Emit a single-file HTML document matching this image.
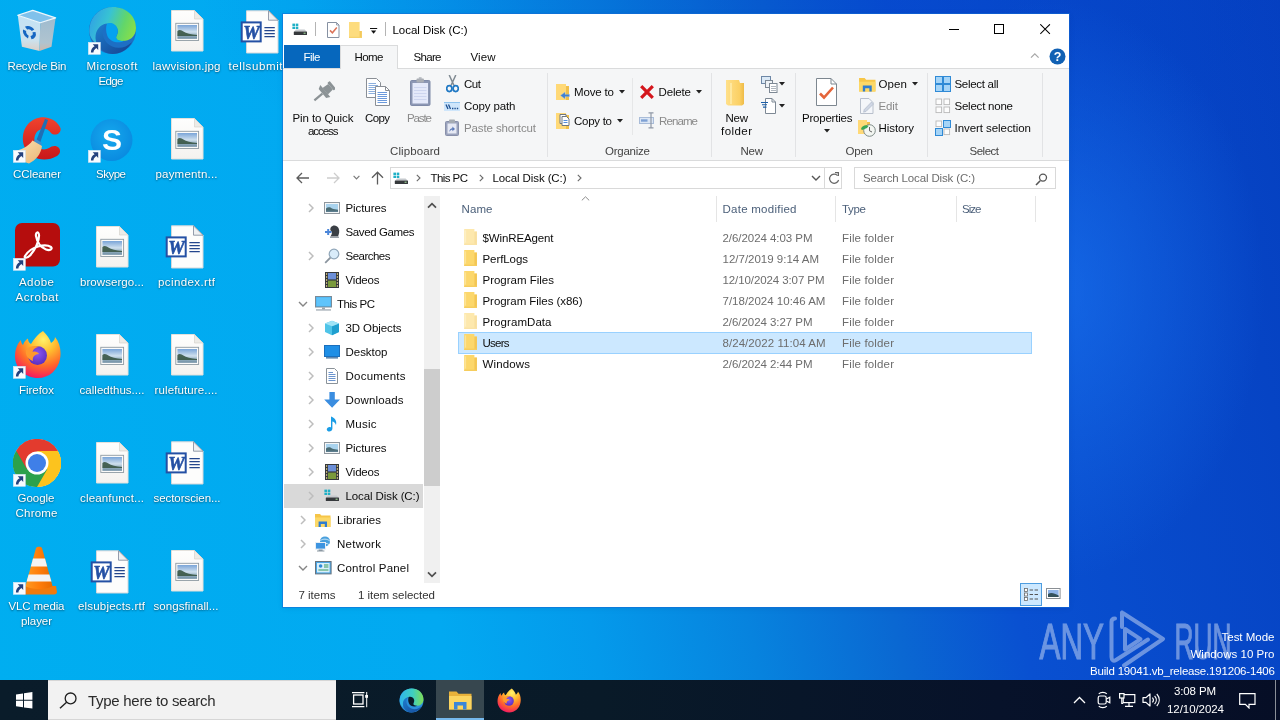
<!DOCTYPE html>
<html lang="en"><head><meta charset="utf-8"><title>Local Disk (C:)</title>
<style>
html,body{margin:0;padding:0}
body{width:1280px;height:720px;overflow:hidden;position:relative;font-family:"Liberation Sans", sans-serif;background:#0aa0ee}
#root{position:absolute;left:0;top:0;width:1280px;height:720px;overflow:hidden;will-change:transform}
#root div,#root svg,#root span.t{position:absolute;display:block}
span.t{white-space:pre}

</style></head><body><div id="root">
<div id="wall" style="left:0;top:0;width:1280px;height:720px;background:radial-gradient(ellipse 210px 290px at 1055px 290px, rgba(28,120,245,.6), rgba(28,120,245,0) 100%),radial-gradient(ellipse 620px 230px at 820px 0px, rgba(0,60,200,.34), rgba(0,60,200,0) 100%),linear-gradient(77.6deg,#00aef0 0%,#02a9f1 32%,#049aeb 42.5%,#0783de 53.5%,#0a68d2 63.5%,#0950d1 72.5%,#0540c0 100%)"></div>
<svg style="left:16px;top:8px;" width="42" height="45" viewBox="0 0 42 45"><defs><linearGradient id="rbl" x1="0" y1="0" x2="0" y2="1"><stop offset="0" stop-color="#d2e6f5"/><stop offset=".7" stop-color="#dbe6ee"/><stop offset="1" stop-color="#ecd2c4"/></linearGradient><linearGradient id="rbr" x1="0" y1="0" x2="0" y2="1"><stop offset="0" stop-color="#a7bccd"/><stop offset=".75" stop-color="#b9c5ce"/><stop offset="1" stop-color="#d9b9a8"/></linearGradient></defs><path d="M1.75 7.25 L16.75 2.4 L39.6 9.9 L24.25 14.75Z" fill="#8ec3ea" opacity=".9"/><path d="M1.75 7.25 L24.25 14.75 L23.5 42.9 L5.9 38.75Z" fill="url(#rbl)" opacity=".93"/><path d="M24.25 14.75 L39.6 9.9 L35.5 38.75 L23.5 42.9Z" fill="url(#rbr)" opacity=".95"/><path d="M1.75 7.25 L16.75 2.4 L39.6 9.9 L24.25 14.75Z" fill="none" stroke="#eef6fb" stroke-width="1.3" stroke-linejoin="round"/><g transform="translate(13.4 24.6) skewY(14)"><circle cx="0" cy="0" r="4.9" fill="none" stroke="#1566c2" stroke-width="3.2" stroke-dasharray="7.6 2.66" transform="rotate(-20)"/></g></svg>
<span class="t" style="left:7.50px;top:59.00px;font-size:11.5px;line-height:14px;color:#fff;letter-spacing:-0.172px;text-shadow:0 1px 2px rgba(0,0,0,.42),0 0 2px rgba(0,0,0,.22);">Recycle Bin</span>
<svg style="left:88px;top:6px;" width="49" height="49" viewBox="0 0 49 49"><defs><linearGradient id="eg1" x1="0" y1="0" x2="1" y2="1"><stop offset="0" stop-color="#35c1f1"/><stop offset=".5" stop-color="#2fa2e4"/><stop offset="1" stop-color="#1b66b9"/></linearGradient><linearGradient id="eg2" x1="0" y1=".2" x2="1" y2=".5"><stop offset="0" stop-color="#2f9fe6"/><stop offset=".4" stop-color="#38c3d3"/><stop offset=".75" stop-color="#62d66a"/><stop offset="1" stop-color="#86de4c"/></linearGradient><linearGradient id="eg3" x1="0" y1="0" x2="1" y2="1"><stop offset="0" stop-color="#1d7fd0"/><stop offset="1" stop-color="#15418f"/></linearGradient></defs><circle cx="24.5" cy="24.5" r="23.5" fill="#1d6fc4"/><path d="M1.5 22 C3 9 13 1 25 1 C38 1 48 10 48 22 C48 31 41 35 35 35 C30 35 27 33 28.5 30 C30 27 30.5 25 29 22 C27 18 22 16.5 18 18 C9 21 6 30 9 38 C3 34 .5 28 1.5 22Z" fill="url(#eg2)"/><path d="M9 38 C5 28 10 19 19 17.6 C13 22 13.5 31 19 37 C25 43 36 44 44 36 C40 44 32 48 24.5 48 C18 48 12 44 9 38Z" fill="url(#eg3)"/><path d="M19 17.6 C23 16 28 18 29.4 22.4 C30.4 25.4 29.4 27.6 28.4 30 C27 33.4 31 35.4 36 34.8 C31 38 22 36 19.4 30 C17.6 25.6 17.8 20.6 19 17.6Z" fill="#04a2ef"/></svg>
<svg style="left:88px;top:42px;" width="13" height="13" viewBox="0 0 13 13"><rect x=".3" y=".3" width="12" height="12" fill="#f7fbff" stroke="#cfe3f3" stroke-width=".6"/><path d="M10.2 2.3 L10.2 7.9 L8.4 6.1 C6.6 7.2 5.6 8.6 5.4 10.6 L2.9 10.4 C2.9 7.6 4.2 5.6 6.6 4.3 L4.7 2.3Z" fill="#23427f"/></svg>
<span class="t" style="left:86.50px;top:59.00px;font-size:11.5px;line-height:14px;color:#fff;letter-spacing:0.543px;text-shadow:0 1px 2px rgba(0,0,0,.42),0 0 2px rgba(0,0,0,.22);">Microsoft</span>
<span class="t" style="left:98.50px;top:74.00px;font-size:11.5px;line-height:14px;color:#fff;letter-spacing:-0.620px;text-shadow:0 1px 2px rgba(0,0,0,.42),0 0 2px rgba(0,0,0,.22);">Edge</span>
<svg style="left:171px;top:10px;" width="33" height="42" viewBox="0 0 33 42"><defs><linearGradient id="pg" x1="0" y1="0" x2="0" y2="1"><stop offset="0" stop-color="#fefefd"/><stop offset="1" stop-color="#f4f2ef"/></linearGradient><linearGradient id="sky" x1="0" y1="0" x2="0" y2="1"><stop offset="0" stop-color="#7aa5d8"/><stop offset=".5" stop-color="#cfe0ee"/><stop offset=".7" stop-color="#9db7c6"/><stop offset="1" stop-color="#6d8ca2"/></linearGradient></defs><path d="M0.5 0.5 H23.5 L32 9 V41 H0.5Z" fill="url(#pg)" stroke="#e3e1dc" stroke-width="1"/><path d="M23.5 0.5 V9 H32Z" fill="#ecebe7" stroke="#d6d3cd" stroke-width=".7"/><rect x="4.8" y="13.3" width="22.8" height="17.2" fill="#fbfbfa" stroke="#8f9ba3" stroke-width=".9"/><rect x="6.4" y="15" width="19.6" height="13.8" fill="url(#sky)"/><path d="M6.4 21 C8 19.6 10.4 19.8 12.4 21.6 C15 23.6 20 24.6 26 25 V26 H6.4Z" fill="#3b5848" opacity=".92"/></svg>
<span class="t" style="left:152.50px;top:59.00px;font-size:11.5px;line-height:14px;color:#fff;letter-spacing:0.233px;text-shadow:0 1px 2px rgba(0,0,0,.42),0 0 2px rgba(0,0,0,.22);">lawvision.jpg</span>
<svg style="left:240px;top:10px;" width="39" height="44" viewBox="0 0 39 44"><path d="M6.5 0.8 H28.5 L38 10.2 V43 H6.5Z" fill="#fdfdfc" stroke="#d4d7db" stroke-width="1"/><path d="M28.5 0.8 V10.2 H38Z" fill="#eef0f2" stroke="#8a93a3" stroke-width=".9" stroke-linejoin="round"/><g stroke="#24468c" stroke-width="1.3"><path d="M24.4 17.6H34.8M24.4 20.6H34.8M24.4 23.6H34.8M24.4 26.6H34.8"/></g><rect x="1.7" y="12.4" width="19" height="19" fill="#fff" stroke="#2450a4" stroke-width="2"/><text x="11.4" y="28.6" font-family="Liberation Serif, serif" font-size="19" font-weight="700" font-style="italic" text-anchor="middle" fill="#2450a4" stroke="#2450a4" stroke-width=".6" textLength="16.5" lengthAdjust="spacingAndGlyphs">W</text></svg>
<span class="t" style="left:228.50px;top:59.00px;font-size:11.5px;line-height:14px;color:#fff;letter-spacing:0.602px;text-shadow:0 1px 2px rgba(0,0,0,.42),0 0 2px rgba(0,0,0,.22);">tellsubmit</span>
<svg style="left:13px;top:115px;" width="50" height="49" viewBox="0 0 50 49"><defs><linearGradient id="cc" x1="0" y1="0" x2="0" y2="1"><stop offset="0" stop-color="#f0432e"/><stop offset="1" stop-color="#c8171a"/></linearGradient><linearGradient id="br" x1="0" y1="0" x2="1" y2="1"><stop offset="0" stop-color="#fbe3b3"/><stop offset="1" stop-color="#e9b677"/></linearGradient></defs><path d="M47 12 C42 3 31 0 22 4 C11 9 7 22 12 33 C17 44 32 48 44 41 C47 39 48 36 46 33 C43 30 39 31 36 33 C31 36 24 34 22 28 C20 22 23 15 29 14 C33 13 36 15 38 18 C40 20 44 20 46 18 C48 16 48 14 47 12Z" fill="url(#cc)"/><path d="M32 4 L35 5 L27 28 L23 26Z" fill="#1f6fb5"/><path d="M23 24 L29 28 L27 33 L19 29Z" fill="#3c8fd0"/><path d="M19.5 25.5 L29 31 C28 39 23 45 16 48.5 C10 46.5 4 42.5 0 36.5 C8 35 15.5 31.5 19.5 25.5Z" fill="url(#br)"/></svg>
<svg style="left:13px;top:150px;" width="13" height="13" viewBox="0 0 13 13"><rect x=".3" y=".3" width="12" height="12" fill="#f7fbff" stroke="#cfe3f3" stroke-width=".6"/><path d="M10.2 2.3 L10.2 7.9 L8.4 6.1 C6.6 7.2 5.6 8.6 5.4 10.6 L2.9 10.4 C2.9 7.6 4.2 5.6 6.6 4.3 L4.7 2.3Z" fill="#23427f"/></svg>
<span class="t" style="left:13.00px;top:167.00px;font-size:11.5px;line-height:14px;color:#fff;letter-spacing:-0.083px;text-shadow:0 1px 2px rgba(0,0,0,.42),0 0 2px rgba(0,0,0,.22);">CCleaner</span>
<svg style="left:90px;top:117px;" width="43" height="46" viewBox="0 0 43 46"><defs><radialGradient id="sk" cx=".45" cy=".4" r=".6"><stop offset="0" stop-color="#15a9ee"/><stop offset="1" stop-color="#0a8be0"/></radialGradient></defs><circle cx="21.5" cy="23" r="21" fill="url(#sk)"/><text x="22" y="32.5" font-family="Liberation Sans, sans-serif" font-size="30" font-weight="700" text-anchor="middle" fill="#fff">S</text></svg>
<svg style="left:88px;top:150px;" width="13" height="13" viewBox="0 0 13 13"><rect x=".3" y=".3" width="12" height="12" fill="#f7fbff" stroke="#cfe3f3" stroke-width=".6"/><path d="M10.2 2.3 L10.2 7.9 L8.4 6.1 C6.6 7.2 5.6 8.6 5.4 10.6 L2.9 10.4 C2.9 7.6 4.2 5.6 6.6 4.3 L4.7 2.3Z" fill="#23427f"/></svg>
<span class="t" style="left:96.00px;top:167.00px;font-size:11.5px;line-height:14px;color:#fff;letter-spacing:-0.492px;text-shadow:0 1px 2px rgba(0,0,0,.42),0 0 2px rgba(0,0,0,.22);">Skype</span>
<svg style="left:171px;top:118px;" width="33" height="42" viewBox="0 0 33 42"><path d="M0.5 0.5 H23.5 L32 9 V41 H0.5Z" fill="url(#pg)" stroke="#e3e1dc" stroke-width="1"/><path d="M23.5 0.5 V9 H32Z" fill="#ecebe7" stroke="#d6d3cd" stroke-width=".7"/><rect x="4.8" y="13.3" width="22.8" height="17.2" fill="#fbfbfa" stroke="#8f9ba3" stroke-width=".9"/><rect x="6.4" y="15" width="19.6" height="13.8" fill="url(#sky)"/><path d="M6.4 21 C8 19.6 10.4 19.8 12.4 21.6 C15 23.6 20 24.6 26 25 V26 H6.4Z" fill="#3b5848" opacity=".92"/></svg>
<span class="t" style="left:155.50px;top:167.00px;font-size:11.5px;line-height:14px;color:#fff;letter-spacing:0.191px;text-shadow:0 1px 2px rgba(0,0,0,.42),0 0 2px rgba(0,0,0,.22);">paymentn...</span>
<svg style="left:15px;top:223px;" width="45" height="44" viewBox="0 0 45 44"><rect x="0" y="0" width="45" height="43.5" rx="7" fill="#b50d0d"/><path d="M10 33 C13 28 18 25 23 23.5 C28 22 33 22 36 24 C38 26 35 28 31 26.5 C26 24.5 22 19 21 13 C20.4 9 23.6 8 24 12 C24.4 18 20 27 15 32.5 C12.4 35.4 8.6 35.4 10 33Z" fill="none" stroke="#fff" stroke-width="2.2" stroke-linejoin="round"/></svg>
<svg style="left:13px;top:258px;" width="13" height="13" viewBox="0 0 13 13"><rect x=".3" y=".3" width="12" height="12" fill="#f7fbff" stroke="#cfe3f3" stroke-width=".6"/><path d="M10.2 2.3 L10.2 7.9 L8.4 6.1 C6.6 7.2 5.6 8.6 5.4 10.6 L2.9 10.4 C2.9 7.6 4.2 5.6 6.6 4.3 L4.7 2.3Z" fill="#23427f"/></svg>
<span class="t" style="left:19.00px;top:275.00px;font-size:11.5px;line-height:14px;color:#fff;letter-spacing:0.434px;text-shadow:0 1px 2px rgba(0,0,0,.42),0 0 2px rgba(0,0,0,.22);">Adobe</span>
<span class="t" style="left:15.50px;top:290.00px;font-size:11.5px;line-height:14px;color:#fff;letter-spacing:0.560px;text-shadow:0 1px 2px rgba(0,0,0,.42),0 0 2px rgba(0,0,0,.22);">Acrobat</span>
<svg style="left:96px;top:226px;" width="33" height="42" viewBox="0 0 33 42"><path d="M0.5 0.5 H23.5 L32 9 V41 H0.5Z" fill="url(#pg)" stroke="#e3e1dc" stroke-width="1"/><path d="M23.5 0.5 V9 H32Z" fill="#ecebe7" stroke="#d6d3cd" stroke-width=".7"/><rect x="4.8" y="13.3" width="22.8" height="17.2" fill="#fbfbfa" stroke="#8f9ba3" stroke-width=".9"/><rect x="6.4" y="15" width="19.6" height="13.8" fill="url(#sky)"/><path d="M6.4 21 C8 19.6 10.4 19.8 12.4 21.6 C15 23.6 20 24.6 26 25 V26 H6.4Z" fill="#3b5848" opacity=".92"/></svg>
<span class="t" style="left:80.00px;top:275.00px;font-size:11.5px;line-height:14px;color:#fff;letter-spacing:0.065px;text-shadow:0 1px 2px rgba(0,0,0,.42),0 0 2px rgba(0,0,0,.22);">browsergo...</span>
<svg style="left:165px;top:225px;" width="39" height="44" viewBox="0 0 39 44"><path d="M6.5 0.8 H28.5 L38 10.2 V43 H6.5Z" fill="#fdfdfc" stroke="#d4d7db" stroke-width="1"/><path d="M28.5 0.8 V10.2 H38Z" fill="#eef0f2" stroke="#8a93a3" stroke-width=".9" stroke-linejoin="round"/><g stroke="#24468c" stroke-width="1.3"><path d="M24.4 17.6H34.8M24.4 20.6H34.8M24.4 23.6H34.8M24.4 26.6H34.8"/></g><rect x="1.7" y="12.4" width="19" height="19" fill="#fff" stroke="#2450a4" stroke-width="2"/><text x="11.4" y="28.6" font-family="Liberation Serif, serif" font-size="19" font-weight="700" font-style="italic" text-anchor="middle" fill="#2450a4" stroke="#2450a4" stroke-width=".6" textLength="16.5" lengthAdjust="spacingAndGlyphs">W</text></svg>
<span class="t" style="left:158.00px;top:275.00px;font-size:11.5px;line-height:14px;color:#fff;letter-spacing:0.394px;text-shadow:0 1px 2px rgba(0,0,0,.42),0 0 2px rgba(0,0,0,.22);">pcindex.rtf</span>
<svg style="left:14px;top:330px;" width="47" height="49" viewBox="0 0 47 49"><defs><radialGradient id="ff" cx=".62" cy=".18" r=".95"><stop offset="0" stop-color="#fff36b"/><stop offset=".3" stop-color="#ffbd2e"/><stop offset=".6" stop-color="#ff6a2a"/><stop offset=".85" stop-color="#f5245a"/><stop offset="1" stop-color="#c60084"/></radialGradient><radialGradient id="fp" cx=".5" cy=".4" r=".6"><stop offset="0" stop-color="#8b58f2"/><stop offset="1" stop-color="#5a2ec0"/></radialGradient></defs><path d="M29 1 C33 5 36 9 37 13 C40 11 41 9 41 7 C46 13 47.5 21 46 29 C44 40 35 48 24 48 C11 48 1 38 1 26 C1 20 3 14 7 10 C7 12 7.6 13.6 9 15 C10 12 12 9.6 14 8.6 C14 11 15 13 17 14 C20 9 24 4 29 1Z" fill="url(#ff)"/><circle cx="23.5" cy="25.5" r="9.5" fill="url(#fp)"/><path d="M12 20 C15 16 21 15 26 17 C22 17 19 19 18.6 22 C21 21 24 22 25 24 C21 24 18 27 19 31 C14 29 11 25 12 20Z" fill="#ff9a2e"/></svg>
<svg style="left:13px;top:366px;" width="13" height="13" viewBox="0 0 13 13"><rect x=".3" y=".3" width="12" height="12" fill="#f7fbff" stroke="#cfe3f3" stroke-width=".6"/><path d="M10.2 2.3 L10.2 7.9 L8.4 6.1 C6.6 7.2 5.6 8.6 5.4 10.6 L2.9 10.4 C2.9 7.6 4.2 5.6 6.6 4.3 L4.7 2.3Z" fill="#23427f"/></svg>
<span class="t" style="left:19.00px;top:383.00px;font-size:11.5px;line-height:14px;color:#fff;letter-spacing:-0.026px;text-shadow:0 1px 2px rgba(0,0,0,.42),0 0 2px rgba(0,0,0,.22);">Firefox</span>
<svg style="left:96px;top:334px;" width="33" height="42" viewBox="0 0 33 42"><path d="M0.5 0.5 H23.5 L32 9 V41 H0.5Z" fill="url(#pg)" stroke="#e3e1dc" stroke-width="1"/><path d="M23.5 0.5 V9 H32Z" fill="#ecebe7" stroke="#d6d3cd" stroke-width=".7"/><rect x="4.8" y="13.3" width="22.8" height="17.2" fill="#fbfbfa" stroke="#8f9ba3" stroke-width=".9"/><rect x="6.4" y="15" width="19.6" height="13.8" fill="url(#sky)"/><path d="M6.4 21 C8 19.6 10.4 19.8 12.4 21.6 C15 23.6 20 24.6 26 25 V26 H6.4Z" fill="#3b5848" opacity=".92"/></svg>
<span class="t" style="left:79.50px;top:383.00px;font-size:11.5px;line-height:14px;color:#fff;letter-spacing:0.032px;text-shadow:0 1px 2px rgba(0,0,0,.42),0 0 2px rgba(0,0,0,.22);">calledthus....</span>
<svg style="left:171px;top:334px;" width="33" height="42" viewBox="0 0 33 42"><path d="M0.5 0.5 H23.5 L32 9 V41 H0.5Z" fill="url(#pg)" stroke="#e3e1dc" stroke-width="1"/><path d="M23.5 0.5 V9 H32Z" fill="#ecebe7" stroke="#d6d3cd" stroke-width=".7"/><rect x="4.8" y="13.3" width="22.8" height="17.2" fill="#fbfbfa" stroke="#8f9ba3" stroke-width=".9"/><rect x="6.4" y="15" width="19.6" height="13.8" fill="url(#sky)"/><path d="M6.4 21 C8 19.6 10.4 19.8 12.4 21.6 C15 23.6 20 24.6 26 25 V26 H6.4Z" fill="#3b5848" opacity=".92"/></svg>
<span class="t" style="left:154.50px;top:383.00px;font-size:11.5px;line-height:14px;color:#fff;letter-spacing:0.125px;text-shadow:0 1px 2px rgba(0,0,0,.42),0 0 2px rgba(0,0,0,.22);">rulefuture....</span>
<svg style="left:13px;top:439px;" width="48" height="48" viewBox="0 0 48 48"><circle cx="24" cy="24" r="24" fill="#fff"/><path d="M24 24 L3.2 12 A24 24 0 0 1 44.8 12 Z" fill="#e33b2e"/><path d="M24 24 L44.8 12 A24 24 0 0 1 24 48 Z" fill="#fcc31e"/><path d="M24 24 L24 48 A24 24 0 0 1 3.2 12 Z" fill="#2ca14c"/><path d="M24 12 H44.8 A24 24 0 0 0 3.2 12 L13.6 30 Z" fill="#e33b2e"/><path d="M34.4 30 L24 48 A24 24 0 0 0 44.8 12 H24 Z" fill="#fcc31e"/><path d="M13.6 30 L3.2 12 A24 24 0 0 0 24 48 L34.4 30 Z" fill="#2ca14c"/><circle cx="24" cy="24" r="11.5" fill="#fff"/><circle cx="24" cy="24" r="9" fill="#3f7fe8"/></svg>
<svg style="left:13px;top:474px;" width="13" height="13" viewBox="0 0 13 13"><rect x=".3" y=".3" width="12" height="12" fill="#f7fbff" stroke="#cfe3f3" stroke-width=".6"/><path d="M10.2 2.3 L10.2 7.9 L8.4 6.1 C6.6 7.2 5.6 8.6 5.4 10.6 L2.9 10.4 C2.9 7.6 4.2 5.6 6.6 4.3 L4.7 2.3Z" fill="#23427f"/></svg>
<span class="t" style="left:17.50px;top:491.00px;font-size:11.5px;line-height:14px;color:#fff;letter-spacing:-0.019px;text-shadow:0 1px 2px rgba(0,0,0,.42),0 0 2px rgba(0,0,0,.22);">Google</span>
<span class="t" style="left:15.50px;top:506.00px;font-size:11.5px;line-height:14px;color:#fff;letter-spacing:0.219px;text-shadow:0 1px 2px rgba(0,0,0,.42),0 0 2px rgba(0,0,0,.22);">Chrome</span>
<svg style="left:96px;top:442px;" width="33" height="42" viewBox="0 0 33 42"><path d="M0.5 0.5 H23.5 L32 9 V41 H0.5Z" fill="url(#pg)" stroke="#e3e1dc" stroke-width="1"/><path d="M23.5 0.5 V9 H32Z" fill="#ecebe7" stroke="#d6d3cd" stroke-width=".7"/><rect x="4.8" y="13.3" width="22.8" height="17.2" fill="#fbfbfa" stroke="#8f9ba3" stroke-width=".9"/><rect x="6.4" y="15" width="19.6" height="13.8" fill="url(#sky)"/><path d="M6.4 21 C8 19.6 10.4 19.8 12.4 21.6 C15 23.6 20 24.6 26 25 V26 H6.4Z" fill="#3b5848" opacity=".92"/></svg>
<span class="t" style="left:80.00px;top:491.00px;font-size:11.5px;line-height:14px;color:#fff;letter-spacing:0.165px;text-shadow:0 1px 2px rgba(0,0,0,.42),0 0 2px rgba(0,0,0,.22);">cleanfunct...</span>
<svg style="left:165px;top:441px;" width="39" height="44" viewBox="0 0 39 44"><path d="M6.5 0.8 H28.5 L38 10.2 V43 H6.5Z" fill="#fdfdfc" stroke="#d4d7db" stroke-width="1"/><path d="M28.5 0.8 V10.2 H38Z" fill="#eef0f2" stroke="#8a93a3" stroke-width=".9" stroke-linejoin="round"/><g stroke="#24468c" stroke-width="1.3"><path d="M24.4 17.6H34.8M24.4 20.6H34.8M24.4 23.6H34.8M24.4 26.6H34.8"/></g><rect x="1.7" y="12.4" width="19" height="19" fill="#fff" stroke="#2450a4" stroke-width="2"/><text x="11.4" y="28.6" font-family="Liberation Serif, serif" font-size="19" font-weight="700" font-style="italic" text-anchor="middle" fill="#2450a4" stroke="#2450a4" stroke-width=".6" textLength="16.5" lengthAdjust="spacingAndGlyphs">W</text></svg>
<span class="t" style="left:153.50px;top:491.00px;font-size:11.5px;line-height:14px;color:#fff;letter-spacing:-0.058px;text-shadow:0 1px 2px rgba(0,0,0,.42),0 0 2px rgba(0,0,0,.22);">sectorscien...</span>
<svg style="left:20px;top:546px;" width="38" height="49" viewBox="0 0 38 49"><defs><linearGradient id="vl" x1="0" y1="0" x2="1" y2="0"><stop offset="0" stop-color="#ff9a1f"/><stop offset=".5" stop-color="#ff7d0a"/><stop offset="1" stop-color="#e86a00"/></linearGradient></defs><path d="M2 40 L36 40 L37 46 C37 48 35 48.5 33 48.5 H5 C3 48.5 1 48 1 46Z" fill="#f07a0c"/><path d="M16 2 C17 .4 21 .4 22 2 L32.5 40 C28 44 10 44 5.5 40Z" fill="url(#vl)"/><path d="M13 12.5 H25 L27.2 20.5 H10.8Z" fill="#f3f3f3"/><path d="M8.6 28.5 H29.4 L31.4 35.5 H6.6Z" fill="#f3f3f3"/></svg>
<svg style="left:13px;top:582px;" width="13" height="13" viewBox="0 0 13 13"><rect x=".3" y=".3" width="12" height="12" fill="#f7fbff" stroke="#cfe3f3" stroke-width=".6"/><path d="M10.2 2.3 L10.2 7.9 L8.4 6.1 C6.6 7.2 5.6 8.6 5.4 10.6 L2.9 10.4 C2.9 7.6 4.2 5.6 6.6 4.3 L4.7 2.3Z" fill="#23427f"/></svg>
<span class="t" style="left:8.50px;top:599.00px;font-size:11.5px;line-height:14px;color:#fff;letter-spacing:-0.111px;text-shadow:0 1px 2px rgba(0,0,0,.42),0 0 2px rgba(0,0,0,.22);">VLC media</span>
<span class="t" style="left:21.00px;top:614.00px;font-size:11.5px;line-height:14px;color:#fff;letter-spacing:-0.066px;text-shadow:0 1px 2px rgba(0,0,0,.42),0 0 2px rgba(0,0,0,.22);">player</span>
<svg style="left:90px;top:550px;" width="39" height="44" viewBox="0 0 39 44"><path d="M6.5 0.8 H28.5 L38 10.2 V43 H6.5Z" fill="#fdfdfc" stroke="#d4d7db" stroke-width="1"/><path d="M28.5 0.8 V10.2 H38Z" fill="#eef0f2" stroke="#8a93a3" stroke-width=".9" stroke-linejoin="round"/><g stroke="#24468c" stroke-width="1.3"><path d="M24.4 17.6H34.8M24.4 20.6H34.8M24.4 23.6H34.8M24.4 26.6H34.8"/></g><rect x="1.7" y="12.4" width="19" height="19" fill="#fff" stroke="#2450a4" stroke-width="2"/><text x="11.4" y="28.6" font-family="Liberation Serif, serif" font-size="19" font-weight="700" font-style="italic" text-anchor="middle" fill="#2450a4" stroke="#2450a4" stroke-width=".6" textLength="16.5" lengthAdjust="spacingAndGlyphs">W</text></svg>
<span class="t" style="left:78.00px;top:599.00px;font-size:11.5px;line-height:14px;color:#fff;letter-spacing:0.188px;text-shadow:0 1px 2px rgba(0,0,0,.42),0 0 2px rgba(0,0,0,.22);">elsubjects.rtf</span>
<svg style="left:171px;top:550px;" width="33" height="42" viewBox="0 0 33 42"><path d="M0.5 0.5 H23.5 L32 9 V41 H0.5Z" fill="url(#pg)" stroke="#e3e1dc" stroke-width="1"/><path d="M23.5 0.5 V9 H32Z" fill="#ecebe7" stroke="#d6d3cd" stroke-width=".7"/><rect x="4.8" y="13.3" width="22.8" height="17.2" fill="#fbfbfa" stroke="#8f9ba3" stroke-width=".9"/><rect x="6.4" y="15" width="19.6" height="13.8" fill="url(#sky)"/><path d="M6.4 21 C8 19.6 10.4 19.8 12.4 21.6 C15 23.6 20 24.6 26 25 V26 H6.4Z" fill="#3b5848" opacity=".92"/></svg>
<span class="t" style="left:153.50px;top:599.00px;font-size:11.5px;line-height:14px;color:#fff;letter-spacing:0.082px;text-shadow:0 1px 2px rgba(0,0,0,.42),0 0 2px rgba(0,0,0,.22);">songsfinall...</span>
<div style="left:283px;top:14px;width:786px;height:593px;background:#fff;box-shadow:0 0 0 1px rgba(20,110,215,.55),0 1px 6px rgba(0,20,90,.10);"></div>
<div style="left:283px;top:68px;width:786px;height:93px;background:#f5f6f7;border-top:1px solid #dadbdc;border-bottom:1px solid #dadbdc;box-sizing:border-box;"></div>
<div style="left:284px;top:45px;width:56px;height:23px;background:#0667bd;"></div>
<div style="left:340px;top:45px;width:58px;height:24px;background:#f5f6f7;border:1px solid #dadbdc;border-bottom:none;box-sizing:border-box;"></div>
<span class="t" style="left:303.50px;top:50.00px;font-size:11.5px;line-height:14px;color:#fff;letter-spacing:-0.510px;">File</span>
<span class="t" style="left:354.50px;top:50.00px;font-size:11.5px;line-height:14px;color:#0c0c0c;letter-spacing:-0.562px;">Home</span>
<span class="t" style="left:413.50px;top:50.00px;font-size:11.5px;line-height:14px;color:#0c0c0c;letter-spacing:-0.672px;">Share</span>
<span class="t" style="left:470.50px;top:50.00px;font-size:11.5px;line-height:14px;color:#0c0c0c;letter-spacing:0.094px;">View</span>
<span class="t" style="left:392.50px;top:23.00px;font-size:11.5px;line-height:14px;color:#000;letter-spacing:-0.029px;">Local Disk (C:)</span>
<svg style="left:291.5px;top:23px;" width="16" height="13" viewBox="0 0 16 13"><g fill="#1fb0c6"><rect x=".4" y=".6" width="2.6" height="2.4"/><rect x="3.7" y=".6" width="2.6" height="2.4"/><rect x=".4" y="3.6" width="2.6" height="2.4"/><rect x="3.7" y="3.6" width="2.6" height="2.4"/></g><path d="M4.2 6.4 H12.6 L14.6 8.6 H2.2Z" fill="#c5c9cd"/><rect x="1.8" y="8.4" width="13.2" height="3.6" rx=".5" fill="#36393c"/><rect x="11.6" y="9.7" width="2" height="1" fill="#a8e6a0"/></svg>
<div style="left:315px;top:22px;width:1px;height:14px;background:#b4b4b4;"></div>
<svg style="left:327px;top:22px;" width="13" height="16" viewBox="0 0 13 16"><path d="M.5 .5 H9.5 L12 3 V15.5 H.5Z" fill="#fff" stroke="#8691a2" stroke-width="1"/><path d="M9.5 .5 V3 H12" fill="none" stroke="#8691a2" stroke-width=".8"/><path d="M3 8.4 L5.4 10.8 L9.8 5.6" fill="none" stroke="#dc7358" stroke-width="1.5"/></svg>
<svg style="left:349px;top:22px;" width="14" height="17" viewBox="0 0 14 17"><path d="M0 0 H10.6 V9 H12.8 V16 H0Z" fill="#fddc7e"/><path d="M10.6 9 H12.8 V16 H10.6Z" fill="#f3c95c"/><path d="M0 14.8 H12.8 V16 H0Z" fill="#f6d26c"/></svg>
<svg style="left:369px;top:26px;" width="10" height="9" viewBox="0 0 10 9"><path d="M1 2.5H8.2" stroke="#111" stroke-width="1"/><path d="M2 4.6 H7.2 L4.6 7.8Z" fill="#111"/></svg>
<div style="left:385px;top:22px;width:1px;height:14px;background:#b4b4b4;"></div>
<svg style="left:949px;top:24px;" width="12" height="12" viewBox="0 0 12 12"><path d="M0 5.5H10" stroke="#000" stroke-width="1"/></svg>
<svg style="left:993px;top:24px;" width="12" height="12" viewBox="0 0 12 12"><rect x="1.5" y=".5" width="9" height="9" fill="none" stroke="#000" stroke-width="1"/></svg>
<svg style="left:1040px;top:24px;" width="12" height="12" viewBox="0 0 12 12"><path d="M.3 .3L9.9 9.9M9.9 .3L.3 9.9" stroke="#000" stroke-width="1.05"/></svg>
<svg style="left:1030px;top:52px;" width="10" height="7" viewBox="0 0 10 7"><path d="M1 5.6L4.8 1.8L8.6 5.6" fill="none" stroke="#a8a8a8" stroke-width="1.3"/></svg>
<svg style="left:1048.5px;top:47.5px;" width="17" height="17" viewBox="0 0 17 17"><circle cx="8.5" cy="8.5" r="8" fill="#1161b4"/><text x="8.5" y="13" font-family="Liberation Sans, sans-serif" font-size="12.5" font-weight="700" fill="#fff" text-anchor="middle">?</text></svg>
<div style="left:547px;top:73px;width:1px;height:84px;background:#e2e3e5;"></div>
<div style="left:711px;top:73px;width:1px;height:84px;background:#e2e3e5;"></div>
<div style="left:795px;top:73px;width:1px;height:84px;background:#e2e3e5;"></div>
<div style="left:927px;top:73px;width:1px;height:84px;background:#e2e3e5;"></div>
<div style="left:1042px;top:73px;width:1px;height:84px;background:#e2e3e5;"></div>
<div style="left:632px;top:78px;width:1px;height:57px;background:#e6e7e8;"></div>
<svg style="left:312px;top:81px;" width="23" height="23" viewBox="0 0 23 23"><g transform="rotate(50 11.5 11.5)" fill="#8c9396"><rect x="6.6" y="-.6" width="10" height="3" rx=".7"/><path d="M8 2.4 H15.2 L15.8 9.4 H7.4Z"/><path d="M3.8 9.2 H19.4 L17.4 13 H5.8Z"/><rect x="10.5" y="13" width="2.2" height="10.5"/></g></svg>
<span class="t" style="left:292.50px;top:111.00px;font-size:11.5px;line-height:14px;color:#0c0c0c;letter-spacing:-0.091px;">Pin to Quick</span>
<span class="t" style="left:308.00px;top:124.00px;font-size:11.5px;line-height:14px;color:#0c0c0c;letter-spacing:-1.059px;">access</span>
<svg style="left:366px;top:78px;" width="25" height="28" viewBox="0 0 25 28"><g><path d="M.5 .5 H10.5 L14.5 4.5 V19.5 H.5Z" fill="#fff" stroke="#8a8f96"/><path d="M2.5 5.5H10M2.5 7.5H12M2.5 9.5H12M2.5 11.5H12M2.5 13.5H12M2.5 15.5H12" stroke="#7fa6d9" stroke-width=".9"/></g><g transform="translate(9 8)"><path d="M.5 .5 H10.5 L14.5 4.5 V19.5 H.5Z" fill="#fff" stroke="#8a8f96"/><path d="M10.5 .5V4.5H14.5" fill="none" stroke="#8a8f96"/><path d="M2.5 6.5H12M2.5 8.5H12M2.5 10.5H12M2.5 12.5H12M2.5 14.5H12M2.5 16.5H12" stroke="#5b8fd8" stroke-width=".9"/></g></svg>
<span class="t" style="left:365.00px;top:111.00px;font-size:11.5px;line-height:14px;color:#0c0c0c;letter-spacing:-0.620px;">Copy</span>
<svg style="left:410px;top:77px;" width="21" height="29" viewBox="0 0 21 29"><rect x=".5" y="3.5" width="19.5" height="25" rx="1.2" fill="#8c97b4" stroke="#7f8aa8"/><rect x="2.5" y="6" width="15.5" height="20.5" fill="#e4e9fa"/><rect x="6.5" y="1.6" width="7.4" height="4" rx=".8" fill="#a9adb4"/><rect x="8.8" y=".2" width="2.8" height="2" fill="#b3b7bd"/><path d="M4 10.5H16.5M4 13.5H16.5M4 16.5H16.5M4 19.5H16.5M4 22.5H16.5" stroke="#cdd5ef" stroke-width="1"/></svg>
<span class="t" style="left:407.00px;top:111.00px;font-size:11.5px;line-height:14px;color:#8a8a8a;letter-spacing:-1.105px;">Paste</span>
<svg style="left:446px;top:75px;" width="13" height="18" viewBox="0 0 13 18"><path d="M3.2 0 L8 10.5M9.8 0 L5 10.5" stroke="#808a92" stroke-width="1.5" fill="none"/><ellipse cx="3.3" cy="13.6" rx="2.6" ry="3" fill="none" stroke="#2179c4" stroke-width="1.7"/><ellipse cx="9.7" cy="13.6" rx="2.6" ry="3" fill="none" stroke="#2179c4" stroke-width="1.7"/></svg>
<span class="t" style="left:464.00px;top:77.00px;font-size:11.5px;line-height:14px;color:#0c0c0c;letter-spacing:-0.453px;">Cut</span>
<svg style="left:443.5px;top:102px;" width="16" height="9" viewBox="0 0 16 9"><rect x="0" y="0" width="16" height="9" fill="#cfe6fb"/><rect x="0" y="0" width="16" height="1" fill="#8fc3ee"/><path d="M2 2.5 L4 7 M4.5 2.5 L6.5 7" stroke="#1d4f91" stroke-width="1.3"/><path d="M8 6.5h1.4M10.4 6.5h1.4M12.8 6.5h1.4" stroke="#1d4f91" stroke-width="1.4"/></svg>
<span class="t" style="left:464.00px;top:99.00px;font-size:11.5px;line-height:14px;color:#0c0c0c;letter-spacing:-0.117px;">Copy path</span>
<svg style="left:445px;top:119px;" width="14" height="17" viewBox="0 0 14 17"><rect x=".5" y="2.5" width="13" height="14" rx="1" fill="#9ba3bd" stroke="#8890aa"/><rect x="2.5" y="4.5" width="9" height="10" fill="#e6e9f4"/><rect x="4" y=".5" width="6" height="3.4" rx=".8" fill="#a5abb2"/><path d="M4.4 13 C4.4 10.4 5.6 9.2 7.4 9.2 L7.4 7.6 L10 10 L7.4 12.2 L7.4 10.8 C6.2 10.8 5.2 11.4 4.4 13Z" fill="#5a79b8"/></svg>
<span class="t" style="left:464.00px;top:121.00px;font-size:11.5px;line-height:14px;color:#8a8a8a;letter-spacing:-0.117px;">Paste shortcut</span>
<span class="t" style="left:390.00px;top:144.00px;font-size:11.5px;line-height:14px;color:#444;letter-spacing:0.096px;">Clipboard</span>
<svg style="left:556px;top:84px;" width="15" height="17" viewBox="0 0 15 17"><path d="M0 0 H10 V2 H13 V16 H0Z" fill="#ffd977"/><path d="M10 2 H13 V16 H10Z" fill="#f0bf4a"/><path d="M13.4 10.4 H9 V8.2 L4.6 11.5 L9 14.8 V12.6 H13.4Z" fill="#3f7fd2" stroke="#7fb0ea" stroke-width=".4"/></svg>
<span class="t" style="left:574.00px;top:85.00px;font-size:11.5px;line-height:14px;color:#0c0c0c;letter-spacing:-0.154px;">Move to</span>
<svg style="left:618.5px;top:90px;" width="6" height="4" viewBox="0 0 6 4"><path d="M0 0H6L3 3.4Z" fill="#222"/></svg>
<svg style="left:556px;top:113px;" width="15" height="17" viewBox="0 0 15 17"><path d="M0 0 H10 V2 H13 V16 H0Z" fill="#ffd977"/><path d="M10 2 H13 V16 H10Z" fill="#f0bf4a"/><g transform="translate(3.5 1)"><path d="M.5 .5H6.5V9.5H.5Z" fill="#fff" stroke="#70767c"/><path d="M2.5 2.5H7L9.5 5V11.5H2.5Z" fill="#fff" stroke="#70767c"/><path d="M4 6.5H8M4 8.5H8" stroke="#3f7fd6" stroke-width=".9"/></g></svg>
<span class="t" style="left:574.00px;top:114.00px;font-size:11.5px;line-height:14px;color:#0c0c0c;letter-spacing:-0.273px;">Copy to</span>
<svg style="left:617px;top:119px;" width="6" height="4" viewBox="0 0 6 4"><path d="M0 0H6L3 3.4Z" fill="#222"/></svg>
<svg style="left:640px;top:85px;" width="14" height="14" viewBox="0 0 14 14"><path d="M1.2 1.2 L12.8 12.8 M12.8 1.2 L1.2 12.8" stroke="#d4161c" stroke-width="3.2"/></svg>
<span class="t" style="left:658.50px;top:85.00px;font-size:11.5px;line-height:14px;color:#0c0c0c;letter-spacing:-0.150px;">Delete</span>
<svg style="left:695.5px;top:90px;" width="6" height="4" viewBox="0 0 6 4"><path d="M0 0H6L3 3.4Z" fill="#222"/></svg>
<svg style="left:639px;top:112px;" width="17" height="17" viewBox="0 0 17 17"><rect x=".5" y="5.5" width="14" height="6" fill="#dbe6f5" stroke="#a9bcd8"/><rect x="2" y="7.3" width="6.5" height="2.4" fill="#7fa1d4"/><path d="M9.5 .8 H14.5 M12 .8 V15.8 M9.5 15.8 H14.5" stroke="#8f98a6" stroke-width="1.2" fill="none"/></svg>
<span class="t" style="left:659.00px;top:114.00px;font-size:11.5px;line-height:14px;color:#8a8a8a;letter-spacing:-0.894px;">Rename</span>
<span class="t" style="left:605.00px;top:144.00px;font-size:11.5px;line-height:14px;color:#444;letter-spacing:-0.239px;">Organize</span>
<svg style="left:725px;top:80px;" width="20" height="26" viewBox="0 0 20 26"><defs><linearGradient id="nf" x1="0" y1="0" x2="1" y2="0"><stop offset="0" stop-color="#ffe08a"/><stop offset=".75" stop-color="#fbd064"/><stop offset="1" stop-color="#eebb48"/></linearGradient></defs><path d="M1 0 H14 L15 3 H19 V24 L17 25.5 H3 L1 24Z" fill="url(#nf)"/><path d="M5 3 H7 V24 H5Z" fill="#fff1b8" opacity=".6"/></svg>
<span class="t" style="left:725.50px;top:111.00px;font-size:11.5px;line-height:14px;color:#0c0c0c;letter-spacing:-0.258px;">New</span>
<span class="t" style="left:721.00px;top:124.00px;font-size:11.5px;line-height:14px;color:#0c0c0c;letter-spacing:0.444px;">folder</span>
<svg style="left:761px;top:76px;" width="17" height="17" viewBox="0 0 17 17"><rect x=".5" y=".5" width="9" height="7" fill="#dbe9f6" stroke="#6d87a6"/><rect x="4.5" y="4.5" width="7" height="7" fill="#eef2f6" stroke="#7d8894"/><rect x="8.5" y="7.5" width="7.5" height="9" fill="#fff" stroke="#7d8894"/><path d="M10 10.5H15M10 12.5H15M10 14.5H15" stroke="#9aa3ad" stroke-width=".8"/></svg>
<svg style="left:778.5px;top:81.5px;" width="6" height="4" viewBox="0 0 6 4"><path d="M0 0H6L3 3.4Z" fill="#222"/></svg>
<svg style="left:761px;top:98px;" width="16" height="17" viewBox="0 0 16 17"><path d="M4.5 .5 H11 L14.5 4 V15.5 H4.5Z" fill="#fff" stroke="#7d8894"/><path d="M11 .5V4H14.5" fill="none" stroke="#7d8894"/><path d="M0 4.5H7M1 6.8H6M2 9.1H5.5" stroke="#1d5fa8" stroke-width="1.1"/></svg>
<svg style="left:778.5px;top:103.5px;" width="6" height="4" viewBox="0 0 6 4"><path d="M0 0H6L3 3.4Z" fill="#222"/></svg>
<span class="t" style="left:740.50px;top:144.00px;font-size:11.5px;line-height:14px;color:#444;letter-spacing:-0.258px;">New</span>
<svg style="left:815px;top:78px;" width="23" height="29" viewBox="0 0 23 29"><path d="M1.5 .5 H16 L21.5 6 V27.5 H1.5Z" fill="#fff" stroke="#7d8790"/><path d="M16 .5V6H21.5" fill="none" stroke="#7d8790"/><path d="M5 15.5 L9 19.5 L18 9.5" fill="none" stroke="#e4653a" stroke-width="2.6"/></svg>
<span class="t" style="left:802.00px;top:111.00px;font-size:11.5px;line-height:14px;color:#0c0c0c;letter-spacing:-0.214px;">Properties</span>
<svg style="left:823.5px;top:128.5px;" width="6" height="4" viewBox="0 0 6 4"><path d="M0 0H6L3 3.4Z" fill="#222"/></svg>
<svg style="left:858.5px;top:76.5px;" width="17" height="15" viewBox="0 0 18 16"><path d="M0 1 H6 L7.5 3 H17.5 V15.5 H0Z" fill="#f7c648"/><path d="M0 5 H17.5 V15.5 H0Z" fill="#fcd867"/><path d="M4 15.5 V9 H13.5 V15.5 H11 V12 H6.5 V15.5Z" fill="#2f7dd1"/></svg>
<span class="t" style="left:878.50px;top:77.00px;font-size:11.5px;line-height:14px;color:#0c0c0c;letter-spacing:0.120px;">Open</span>
<svg style="left:912px;top:81.5px;" width="6" height="4" viewBox="0 0 6 4"><path d="M0 0H6L3 3.4Z" fill="#222"/></svg>
<svg style="left:860px;top:98px;" width="15" height="16" viewBox="0 0 15 16"><path d="M.5 .5 H9 L13 4.5 V15.5 H.5Z" fill="#f4f6fa" stroke="#b9c0cc"/><path d="M11.5 4 L13.5 6 L6 13.5 L3.6 14.2 L4.2 11.6Z" fill="#cfd6e4" stroke="#aab3c4" stroke-width=".6"/></svg>
<span class="t" style="left:878.50px;top:99.00px;font-size:11.5px;line-height:14px;color:#8a8a8a;letter-spacing:-0.109px;">Edit</span>
<svg style="left:858px;top:120px;" width="18" height="17" viewBox="0 0 18 17"><path d="M0 0 H9 V2 H12 V14 H0Z" fill="#ffd977"/><path d="M9 2 H12 V14 H9Z" fill="#f0bf4a"/><circle cx="11.5" cy="10.5" r="5.8" fill="#f3f6f2" stroke="#7d8a86" stroke-width="1"/><path d="M11.5 7 V10.8 L14 12" stroke="#555" stroke-width=".9" fill="none"/><path d="M3 9 C4 5.5 8 4.5 10.5 6 L9 8 L4 10Z" fill="#3aa655"/></svg>
<span class="t" style="left:878.50px;top:121.00px;font-size:11.5px;line-height:14px;color:#0c0c0c;letter-spacing:-0.047px;">History</span>
<span class="t" style="left:845.50px;top:144.00px;font-size:11.5px;line-height:14px;color:#444;letter-spacing:-0.214px;">Open</span>
<svg style="left:935px;top:76px;" width="17" height="17" viewBox="0 0 17 17"><rect x="0.5" y="0.5" width="7" height="7" fill="#a5d4f7" stroke="#2f8ad6"/><rect x="8.5" y="0.5" width="7" height="7" fill="#a5d4f7" stroke="#2f8ad6"/><rect x="0.5" y="8.5" width="7" height="7" fill="#a5d4f7" stroke="#2f8ad6"/><rect x="8.5" y="8.5" width="7" height="7" fill="#a5d4f7" stroke="#2f8ad6"/></svg>
<span class="t" style="left:954.50px;top:77.00px;font-size:11.5px;line-height:14px;color:#0c0c0c;letter-spacing:-0.297px;">Select all</span>
<svg style="left:935px;top:98px;" width="17" height="17" viewBox="0 0 17 17"><rect x="1" y="1" width="5.6" height="5.6" fill="#fdfdfd" stroke="#b9b9b9" stroke-width=".9"/><rect x="9" y="1" width="5.6" height="5.6" fill="#fdfdfd" stroke="#b9b9b9" stroke-width=".9"/><rect x="1" y="9" width="5.6" height="5.6" fill="#fdfdfd" stroke="#b9b9b9" stroke-width=".9"/><rect x="9" y="9" width="5.6" height="5.6" fill="#fdfdfd" stroke="#b9b9b9" stroke-width=".9"/></svg>
<span class="t" style="left:954.50px;top:99.00px;font-size:11.5px;line-height:14px;color:#0c0c0c;letter-spacing:-0.225px;">Select none</span>
<svg style="left:935px;top:120px;" width="17" height="17" viewBox="0 0 17 17"><rect x="1" y="1" width="5.6" height="5.6" fill="#fdfdfd" stroke="#b9b9b9" stroke-width=".9"/><rect x="8.5" y="0.5" width="7" height="7" fill="#a5d4f7" stroke="#2f8ad6"/><rect x="0.5" y="8.5" width="7" height="7" fill="#a5d4f7" stroke="#2f8ad6"/><rect x="9" y="9" width="5.6" height="5.6" fill="#fdfdfd" stroke="#b9b9b9" stroke-width=".9"/></svg>
<span class="t" style="left:954.50px;top:121.00px;font-size:11.5px;line-height:14px;color:#0c0c0c;letter-spacing:-0.057px;">Invert selection</span>
<span class="t" style="left:969.50px;top:144.00px;font-size:11.5px;line-height:14px;color:#444;letter-spacing:-0.494px;">Select</span>
<svg style="left:296px;top:172px;" width="14" height="12" viewBox="0 0 14 12"><path d="M13 6 H1.2 M6 1 L1 6 L6 11" fill="none" stroke="#5c5c5c" stroke-width="1.3"/></svg>
<svg style="left:326px;top:172px;" width="14" height="12" viewBox="0 0 14 12"><path d="M1 6 H12.8 M8 1 L13 6 L8 11" fill="none" stroke="#cdcdcd" stroke-width="1.3"/></svg>
<svg style="left:353px;top:175px;" width="7" height="5" viewBox="0 0 7 5"><path d="M.6 .8 L3.5 3.8 L6.4 .8" fill="none" stroke="#7a7a7a" stroke-width="1.2"/></svg>
<svg style="left:371px;top:171px;" width="13" height="14" viewBox="0 0 13 14"><path d="M6.5 13.5 V1.4 M1 6.8 L6.5 1.2 L12 6.8" fill="none" stroke="#5c5c5c" stroke-width="1.3"/></svg>
<div style="left:390px;top:167px;width:435px;height:22px;border:1px solid #d9d9d9;box-sizing:border-box;background:#fff;"></div>
<svg style="left:393px;top:172px;" width="16" height="13" viewBox="0 0 16 13"><g fill="#1fb0c6"><rect x=".4" y=".6" width="2.6" height="2.4"/><rect x="3.7" y=".6" width="2.6" height="2.4"/><rect x=".4" y="3.6" width="2.6" height="2.4"/><rect x="3.7" y="3.6" width="2.6" height="2.4"/></g><path d="M4.2 6.4 H12.6 L14.6 8.6 H2.2Z" fill="#c5c9cd"/><rect x="1.8" y="8.4" width="13.2" height="3.6" rx=".5" fill="#36393c"/><rect x="11.6" y="9.7" width="2" height="1" fill="#a8e6a0"/></svg>
<svg style="left:416px;top:174px;" width="5" height="8" viewBox="0 0 5 8"><path d="M.8 .8 L4 4 L.8 7.2" fill="none" stroke="#6a6a6a" stroke-width="1.1"/></svg>
<span class="t" style="left:430.50px;top:171.00px;font-size:11.5px;line-height:14px;color:#0c0c0c;letter-spacing:-0.568px;">This PC</span>
<svg style="left:479px;top:174px;" width="5" height="8" viewBox="0 0 5 8"><path d="M.8 .8 L4 4 L.8 7.2" fill="none" stroke="#6a6a6a" stroke-width="1.1"/></svg>
<span class="t" style="left:492.50px;top:171.00px;font-size:11.5px;line-height:14px;color:#0c0c0c;letter-spacing:-0.100px;">Local Disk (C:)</span>
<svg style="left:577px;top:174px;" width="5" height="8" viewBox="0 0 5 8"><path d="M.8 .8 L4 4 L.8 7.2" fill="none" stroke="#6a6a6a" stroke-width="1.1"/></svg>
<svg style="left:811px;top:175px;" width="10" height="7" viewBox="0 0 10 7"><path d="M1 1 L5 5 L9 1" fill="none" stroke="#555" stroke-width="1.4"/></svg>
<div style="left:824px;top:167px;width:18px;height:22px;border:1px solid #d9d9d9;box-sizing:border-box;background:#fff;"></div>
<svg style="left:827.5px;top:172px;" width="12" height="13" viewBox="0 0 12 13"><path d="M9.6 3.6 A4.6 4.6 0 1 0 10.6 8" fill="none" stroke="#666" stroke-width="1.2"/><path d="M7 .6 H10.4 V4" fill="none" stroke="#666" stroke-width="1.2"/></svg>
<div style="left:854px;top:167px;width:202px;height:22px;border:1px solid #d9d9d9;box-sizing:border-box;background:#fff;"></div>
<span class="t" style="left:863.00px;top:171.00px;font-size:11.5px;line-height:14px;color:#6d6d6d;letter-spacing:-0.145px;">Search Local Disk (C:)</span>
<svg style="left:1035px;top:172.5px;" width="13" height="13" viewBox="0 0 13 13"><circle cx="8" cy="4.6" r="3.5" fill="none" stroke="#555" stroke-width="1.3"/><path d="M5.2 7.8 L1 12" stroke="#555" stroke-width="1.6"/></svg>
<div style="left:424px;top:196px;width:16px;height:387px;background:#f0f0f0;"></div>
<div style="left:424px;top:369px;width:16px;height:117px;background:#cdcdcd;"></div>
<svg style="left:427px;top:202px;" width="10" height="7" viewBox="0 0 10 7"><path d="M1 5.6 L5 1.6 L9 5.6" fill="none" stroke="#505050" stroke-width="1.7"/></svg>
<svg style="left:427px;top:571px;" width="10" height="7" viewBox="0 0 10 7"><path d="M1 1.4 L5 5.4 L9 1.4" fill="none" stroke="#505050" stroke-width="1.7"/></svg>
<div style="left:284px;top:484px;width:139px;height:24px;background:#d9d9d9;"></div>
<svg style="left:308px;top:203px;" width="6" height="10" viewBox="0 0 6 10"><path d="M1 1 L5 5 L1 9" fill="none" stroke="#bdbdbd" stroke-width="1.5"/></svg>
<svg style="left:324px;top:200px;" width="17" height="16" viewBox="0 0 17 16"><rect x=".5" y="2.5" width="15" height="11" fill="#f4f6f7" stroke="#8f979e"/><rect x="2" y="4" width="12" height="8" fill="#a9d3ee"/><path d="M2 8.4 C4 6.6 6.4 7 8 8.6 C10 9.6 12 9.4 14 9.8 V12 H2Z" fill="#4a6b73"/><path d="M2 10.6 H14 V12 H2Z" fill="#5d7f90"/></svg>
<span class="t" style="left:345.50px;top:201.00px;font-size:11.5px;line-height:14px;color:#0c0c0c;letter-spacing:-0.078px;">Pictures</span>
<svg style="left:324px;top:224px;" width="17" height="16" viewBox="0 0 17 16"><path d="M7 3 C9 .5 13 1 14.5 4 C16 7 15 10 14 12.5 H6.5 C8 10 8.5 8 7 7 C6 6.4 6 4.4 7 3Z" fill="#3a3f45"/><path d="M1 7 h2.2 v-2 h2 v2 h2.2 v2 h-2.2 v2 h-2 v-2 h-2.2z" fill="#4b86d9"/><path d="M6 12.5 H15 V14 H6Z" fill="#9aa1a8"/></svg>
<span class="t" style="left:345.50px;top:225.00px;font-size:11.5px;line-height:14px;color:#0c0c0c;letter-spacing:-0.388px;">Saved Games</span>
<svg style="left:308px;top:251px;" width="6" height="10" viewBox="0 0 6 10"><path d="M1 1 L5 5 L1 9" fill="none" stroke="#bdbdbd" stroke-width="1.5"/></svg>
<svg style="left:324px;top:248px;" width="17" height="16" viewBox="0 0 17 16"><circle cx="10" cy="6" r="4.8" fill="#d9ecfa" stroke="#8fa5b8" stroke-width="1.2"/><path d="M6.4 9.6 L1.2 14.8" stroke="#8a949e" stroke-width="1.8"/></svg>
<span class="t" style="left:345.50px;top:249.00px;font-size:11.5px;line-height:14px;color:#0c0c0c;letter-spacing:-0.513px;">Searches</span>
<svg style="left:324px;top:272px;" width="17" height="16" viewBox="0 0 17 16"><rect x="1" y="0" width="14" height="16" fill="#35383c"/><rect x="4" y="1" width="8" height="6.4" fill="#6c8fd8"/><rect x="4" y="8.6" width="8" height="6.4" fill="#7a9a3c"/><path d="M2 1.2h1.2v1.6H2zM2 4.2h1.2v1.6H2zM2 7.2h1.2v1.6H2zM2 10.2h1.2v1.6H2zM2 13.2h1.2v1.6H2zM12.8 1.2H14v1.6h-1.2zM12.8 4.2H14v1.6h-1.2zM12.8 7.2H14v1.6h-1.2zM12.8 10.2H14v1.6h-1.2zM12.8 13.2H14v1.6h-1.2z" fill="#e8d48a"/></svg>
<span class="t" style="left:345.50px;top:273.00px;font-size:11.5px;line-height:14px;color:#0c0c0c;letter-spacing:-0.194px;">Videos</span>
<svg style="left:298px;top:301px;" width="10" height="6" viewBox="0 0 10 6"><path d="M1 1 L5 5 L9 1" fill="none" stroke="#858585" stroke-width="1.4"/></svg>
<svg style="left:315px;top:296px;" width="17" height="16" viewBox="0 0 17 16"><rect x=".5" y=".5" width="16" height="10.5" fill="#4db4f0" stroke="#7b8b97"/><rect x="1.6" y="1.6" width="13.8" height="8.3" fill="#5fc4fb"/><path d="M7 11.5h3v1.8h-3z" fill="#9aa5ad"/><path d="M1 13.4h15v1.1h-15z" fill="#8f9ba4"/></svg>
<span class="t" style="left:337.00px;top:297.00px;font-size:11.5px;line-height:14px;color:#0c0c0c;letter-spacing:-0.484px;">This PC</span>
<svg style="left:308px;top:323px;" width="6" height="10" viewBox="0 0 6 10"><path d="M1 1 L5 5 L1 9" fill="none" stroke="#bdbdbd" stroke-width="1.5"/></svg>
<svg style="left:324px;top:320px;" width="17" height="16" viewBox="0 0 17 16"><path d="M8 .8 L15 3.4 V12 L8 15.2 L1 12 V3.4Z" fill="#4fc4e8"/><path d="M8 6.2 L15 3.4 V12 L8 15.2Z" fill="#1f9fcf"/><path d="M8 6.2 L1 3.4 L8 .8 L15 3.4Z" fill="#9fe3f6"/></svg>
<span class="t" style="left:345.50px;top:321.00px;font-size:11.5px;line-height:14px;color:#0c0c0c;letter-spacing:-0.099px;">3D Objects</span>
<svg style="left:308px;top:347px;" width="6" height="10" viewBox="0 0 6 10"><path d="M1 1 L5 5 L1 9" fill="none" stroke="#bdbdbd" stroke-width="1.5"/></svg>
<svg style="left:324px;top:344px;" width="17" height="16" viewBox="0 0 17 16"><rect x=".5" y="1.5" width="15" height="11" fill="#1f8fe6" stroke="#1a6fbd"/><rect x="2" y="13.2" width="12" height="1.3" fill="#3d6e9c"/></svg>
<span class="t" style="left:345.50px;top:345.00px;font-size:11.5px;line-height:14px;color:#0c0c0c;letter-spacing:-0.031px;">Desktop</span>
<svg style="left:308px;top:371px;" width="6" height="10" viewBox="0 0 6 10"><path d="M1 1 L5 5 L1 9" fill="none" stroke="#bdbdbd" stroke-width="1.5"/></svg>
<svg style="left:324px;top:368px;" width="17" height="16" viewBox="0 0 17 16"><path d="M2.5 .5 H10.5 L13.5 3.5 V15.5 H2.5Z" fill="#fff" stroke="#8a9299"/><path d="M4.5 4.5H9M4.5 6.5H11.5M4.5 8.5H11.5M4.5 10.5H11.5M4.5 12.5H11.5" stroke="#5a88c8" stroke-width=".9"/></svg>
<span class="t" style="left:345.50px;top:369.00px;font-size:11.5px;line-height:14px;color:#0c0c0c;letter-spacing:0.229px;">Documents</span>
<svg style="left:308px;top:395px;" width="6" height="10" viewBox="0 0 6 10"><path d="M1 1 L5 5 L1 9" fill="none" stroke="#bdbdbd" stroke-width="1.5"/></svg>
<svg style="left:324px;top:392px;" width="17" height="16" viewBox="0 0 17 16"><path d="M5.4 0 H10.8 V7.4 H16 L8.1 15.8 L.2 7.4 H5.4Z" fill="#3a8de0"/></svg>
<span class="t" style="left:345.50px;top:393.00px;font-size:11.5px;line-height:14px;color:#0c0c0c;letter-spacing:0.137px;">Downloads</span>
<svg style="left:308px;top:419px;" width="6" height="10" viewBox="0 0 6 10"><path d="M1 1 L5 5 L1 9" fill="none" stroke="#bdbdbd" stroke-width="1.5"/></svg>
<svg style="left:324px;top:416px;" width="17" height="16" viewBox="0 0 17 16"><path d="M7 .6 C10.4 1.8 13.2 4.6 12 9 C11.2 6.6 9.8 5.6 8.4 5.4 V12.4 C8.4 14.6 6.4 15.8 4.4 15.4 C2.6 15 2.2 13 3.6 11.8 C4.6 10.9 6 10.8 7 11.4Z" fill="#1a9de6"/></svg>
<span class="t" style="left:345.50px;top:417.00px;font-size:11.5px;line-height:14px;color:#0c0c0c;letter-spacing:0.242px;">Music</span>
<svg style="left:308px;top:443px;" width="6" height="10" viewBox="0 0 6 10"><path d="M1 1 L5 5 L1 9" fill="none" stroke="#bdbdbd" stroke-width="1.5"/></svg>
<svg style="left:324px;top:440px;" width="17" height="16" viewBox="0 0 17 16"><rect x=".5" y="2.5" width="15" height="11" fill="#f4f6f7" stroke="#8f979e"/><rect x="2" y="4" width="12" height="8" fill="#a9d3ee"/><path d="M2 8.4 C4 6.6 6.4 7 8 8.6 C10 9.6 12 9.4 14 9.8 V12 H2Z" fill="#4a6b73"/><path d="M2 10.6 H14 V12 H2Z" fill="#5d7f90"/></svg>
<span class="t" style="left:345.50px;top:441.00px;font-size:11.5px;line-height:14px;color:#0c0c0c;letter-spacing:-0.078px;">Pictures</span>
<svg style="left:308px;top:467px;" width="6" height="10" viewBox="0 0 6 10"><path d="M1 1 L5 5 L1 9" fill="none" stroke="#bdbdbd" stroke-width="1.5"/></svg>
<svg style="left:324px;top:464px;" width="17" height="16" viewBox="0 0 17 16"><rect x="1" y="0" width="14" height="16" fill="#35383c"/><rect x="4" y="1" width="8" height="6.4" fill="#6c8fd8"/><rect x="4" y="8.6" width="8" height="6.4" fill="#7a9a3c"/><path d="M2 1.2h1.2v1.6H2zM2 4.2h1.2v1.6H2zM2 7.2h1.2v1.6H2zM2 10.2h1.2v1.6H2zM2 13.2h1.2v1.6H2zM12.8 1.2H14v1.6h-1.2zM12.8 4.2H14v1.6h-1.2zM12.8 7.2H14v1.6h-1.2zM12.8 10.2H14v1.6h-1.2zM12.8 13.2H14v1.6h-1.2z" fill="#e8d48a"/></svg>
<span class="t" style="left:345.50px;top:465.00px;font-size:11.5px;line-height:14px;color:#0c0c0c;letter-spacing:-0.194px;">Videos</span>
<svg style="left:308px;top:491px;" width="6" height="10" viewBox="0 0 6 10"><path d="M1 1 L5 5 L1 9" fill="none" stroke="#bdbdbd" stroke-width="1.5"/></svg>
<svg style="left:324px;top:489px;" width="16" height="13" viewBox="0 0 16 13"><g fill="#1fb0c6"><rect x=".4" y=".6" width="2.6" height="2.4"/><rect x="3.7" y=".6" width="2.6" height="2.4"/><rect x=".4" y="3.6" width="2.6" height="2.4"/><rect x="3.7" y="3.6" width="2.6" height="2.4"/></g><path d="M4.2 6.4 H12.6 L14.6 8.6 H2.2Z" fill="#c5c9cd"/><rect x="1.8" y="8.4" width="13.2" height="3.6" rx=".5" fill="#36393c"/><rect x="11.6" y="9.7" width="2" height="1" fill="#a8e6a0"/></svg>
<span class="t" style="left:345.50px;top:489.00px;font-size:11.5px;line-height:14px;color:#0c0c0c;letter-spacing:-0.100px;">Local Disk (C:)</span>
<svg style="left:300px;top:515px;" width="6" height="10" viewBox="0 0 6 10"><path d="M1 1 L5 5 L1 9" fill="none" stroke="#bdbdbd" stroke-width="1.5"/></svg>
<svg style="left:315px;top:512px;" width="17" height="16" viewBox="0 0 17 16"><path d="M0 2 H5 L6.4 3.6 H15.5 V15 H0Z" fill="#f6c548"/><path d="M0 5.4 H15.5 V15 H0Z" fill="#fcd867"/><path d="M3.6 15 V9.6 H12 V15 H9.8 V12 H5.8 V15Z" fill="#2f7dd1"/></svg>
<span class="t" style="left:337.00px;top:513.00px;font-size:11.5px;line-height:14px;color:#0c0c0c;letter-spacing:-0.014px;">Libraries</span>
<svg style="left:300px;top:539px;" width="6" height="10" viewBox="0 0 6 10"><path d="M1 1 L5 5 L1 9" fill="none" stroke="#bdbdbd" stroke-width="1.5"/></svg>
<svg style="left:315px;top:536px;" width="17" height="16" viewBox="0 0 17 16"><circle cx="10" cy="5.4" r="5" fill="#4aa0dd"/><path d="M5.4 4.6 C8 2.6 12 2.6 14.8 5 M6.6 8.4 C9 6.8 12 7 14 8.6" stroke="#d6ecf9" stroke-width=".9" fill="none"/><rect x=".5" y="6.5" width="10" height="6.6" fill="#3d94e0" stroke="#e6eef5"/><path d="M3.6 13.4h4v1.2h-4zM2 14.6h7.4v1H2z" fill="#8a97a2"/></svg>
<span class="t" style="left:337.00px;top:537.00px;font-size:11.5px;line-height:14px;color:#0c0c0c;letter-spacing:0.302px;">Network</span>
<svg style="left:298px;top:565px;" width="10" height="6" viewBox="0 0 10 6"><path d="M1 1 L5 5 L9 1" fill="none" stroke="#858585" stroke-width="1.4"/></svg>
<svg style="left:315px;top:560px;" width="17" height="16" viewBox="0 0 17 16"><rect x=".5" y="1.5" width="15.6" height="12.4" fill="#4aa6e6" stroke="#68737d"/><rect x="2" y="3" width="12.6" height="9.4" fill="#d9f0fb"/><circle cx="5.6" cy="6" r="1.8" fill="#2f8ad6"/><path d="M9 5h4.4M9 7h4.4M3.4 10h10" stroke="#3a9a5c" stroke-width="1.2"/></svg>
<span class="t" style="left:337.00px;top:561.00px;font-size:11.5px;line-height:14px;color:#0c0c0c;letter-spacing:0.193px;">Control Panel</span>
<svg style="left:581px;top:196px;" width="9" height="5" viewBox="0 0 9 5"><path d="M.8 4.4 L4.5 .8 L8.2 4.4" fill="none" stroke="#8b8b8b" stroke-width="1"/></svg>
<span class="t" style="left:461.50px;top:202.00px;font-size:11.5px;line-height:14px;color:#4c607a;letter-spacing:0.104px;">Name</span>
<span class="t" style="left:722.50px;top:202.00px;font-size:11.5px;line-height:14px;color:#4c607a;letter-spacing:0.253px;">Date modified</span>
<span class="t" style="left:842.00px;top:202.00px;font-size:11.5px;line-height:14px;color:#4c607a;letter-spacing:-0.312px;">Type</span>
<span class="t" style="left:962.00px;top:202.00px;font-size:11.5px;line-height:14px;color:#4c607a;letter-spacing:-0.958px;">Size</span>
<div style="left:716px;top:196px;width:1px;height:26px;background:#e5e5e5;"></div>
<div style="left:835px;top:196px;width:1px;height:26px;background:#e5e5e5;"></div>
<div style="left:956px;top:196px;width:1px;height:26px;background:#e5e5e5;"></div>
<div style="left:1035px;top:196px;width:1px;height:26px;background:#e5e5e5;"></div>
<div style="left:458px;top:332px;width:574px;height:22px;background:#cce8ff;border:1px solid #99d1ff;box-sizing:border-box;"></div>
<svg style="left:464px;top:229px;" width="13" height="16" viewBox="0 0 13 16"><g opacity=".55"><path d="M.2 0 H10.4 V2.6 H12.9 V16 H.2Z" fill="#fcd76b"/><path d="M10.4 2.6 H12.9 V16 H10.4Z" fill="#f3c654"/><path d="M.2 14.6 H12.9 V16 H.2Z" fill="#f6cd5e"/><path d="M1.6 1.4 V13.6" stroke="#fde59a" stroke-width="1"/></g></svg>
<span class="t" style="left:482.50px;top:231.00px;font-size:11.5px;line-height:14px;color:#0c0c0c;letter-spacing:-0.123px;">$WinREAgent</span>
<span class="t" style="left:722.50px;top:231.00px;font-size:11.5px;line-height:14px;color:#6d6d6d;letter-spacing:-0.053px;">2/6/2024 4:03 PM</span>
<span class="t" style="left:842.00px;top:231.00px;font-size:11.5px;line-height:14px;color:#6d6d6d;letter-spacing:0.150px;">File folder</span>
<svg style="left:464px;top:250px;" width="13" height="16" viewBox="0 0 13 16"><g opacity="1"><path d="M.2 0 H10.4 V2.6 H12.9 V16 H.2Z" fill="#fcd76b"/><path d="M10.4 2.6 H12.9 V16 H10.4Z" fill="#f3c654"/><path d="M.2 14.6 H12.9 V16 H.2Z" fill="#f6cd5e"/><path d="M1.6 1.4 V13.6" stroke="#fde59a" stroke-width="1"/></g></svg>
<span class="t" style="left:482.50px;top:252.00px;font-size:11.5px;line-height:14px;color:#0c0c0c;letter-spacing:-0.076px;">PerfLogs</span>
<span class="t" style="left:722.50px;top:252.00px;font-size:11.5px;line-height:14px;color:#6d6d6d;">12/7/2019 9:14 AM</span>
<span class="t" style="left:842.00px;top:252.00px;font-size:11.5px;line-height:14px;color:#6d6d6d;letter-spacing:0.150px;">File folder</span>
<svg style="left:464px;top:271px;" width="13" height="16" viewBox="0 0 13 16"><g opacity="1"><path d="M.2 0 H10.4 V2.6 H12.9 V16 H.2Z" fill="#fcd76b"/><path d="M10.4 2.6 H12.9 V16 H10.4Z" fill="#f3c654"/><path d="M.2 14.6 H12.9 V16 H.2Z" fill="#f6cd5e"/><path d="M1.6 1.4 V13.6" stroke="#fde59a" stroke-width="1"/></g></svg>
<span class="t" style="left:482.50px;top:273.00px;font-size:11.5px;line-height:14px;color:#0c0c0c;letter-spacing:-0.007px;">Program Files</span>
<span class="t" style="left:722.50px;top:273.00px;font-size:11.5px;line-height:14px;color:#6d6d6d;letter-spacing:-0.094px;">12/10/2024 3:07 PM</span>
<span class="t" style="left:842.00px;top:273.00px;font-size:11.5px;line-height:14px;color:#6d6d6d;letter-spacing:0.150px;">File folder</span>
<svg style="left:464px;top:292px;" width="13" height="16" viewBox="0 0 13 16"><g opacity="1"><path d="M.2 0 H10.4 V2.6 H12.9 V16 H.2Z" fill="#fcd76b"/><path d="M10.4 2.6 H12.9 V16 H10.4Z" fill="#f3c654"/><path d="M.2 14.6 H12.9 V16 H.2Z" fill="#f6cd5e"/><path d="M1.6 1.4 V13.6" stroke="#fde59a" stroke-width="1"/></g></svg>
<span class="t" style="left:482.50px;top:294.00px;font-size:11.5px;line-height:14px;color:#0c0c0c;letter-spacing:-0.054px;">Program Files (x86)</span>
<span class="t" style="left:722.50px;top:294.00px;font-size:11.5px;line-height:14px;color:#6d6d6d;">7/18/2024 10:46 AM</span>
<span class="t" style="left:842.00px;top:294.00px;font-size:11.5px;line-height:14px;color:#6d6d6d;letter-spacing:0.150px;">File folder</span>
<svg style="left:464px;top:313px;" width="13" height="16" viewBox="0 0 13 16"><g opacity=".55"><path d="M.2 0 H10.4 V2.6 H12.9 V16 H.2Z" fill="#fcd76b"/><path d="M10.4 2.6 H12.9 V16 H10.4Z" fill="#f3c654"/><path d="M.2 14.6 H12.9 V16 H.2Z" fill="#f6cd5e"/><path d="M1.6 1.4 V13.6" stroke="#fde59a" stroke-width="1"/></g></svg>
<span class="t" style="left:482.50px;top:315.00px;font-size:11.5px;line-height:14px;color:#0c0c0c;letter-spacing:0.061px;">ProgramData</span>
<span class="t" style="left:722.50px;top:315.00px;font-size:11.5px;line-height:14px;color:#6d6d6d;letter-spacing:-0.053px;">2/6/2024 3:27 PM</span>
<span class="t" style="left:842.00px;top:315.00px;font-size:11.5px;line-height:14px;color:#6d6d6d;letter-spacing:0.150px;">File folder</span>
<svg style="left:464px;top:334px;" width="13" height="16" viewBox="0 0 13 16"><g opacity="1"><path d="M.2 0 H10.4 V2.6 H12.9 V16 H.2Z" fill="#fcd76b"/><path d="M10.4 2.6 H12.9 V16 H10.4Z" fill="#f3c654"/><path d="M.2 14.6 H12.9 V16 H.2Z" fill="#f6cd5e"/><path d="M1.6 1.4 V13.6" stroke="#fde59a" stroke-width="1"/></g></svg>
<span class="t" style="left:482.50px;top:336.00px;font-size:11.5px;line-height:14px;color:#0c0c0c;letter-spacing:-0.758px;">Users</span>
<span class="t" style="left:722.50px;top:336.00px;font-size:11.5px;line-height:14px;color:#6d6d6d;letter-spacing:0.053px;">8/24/2022 11:04 AM</span>
<span class="t" style="left:842.00px;top:336.00px;font-size:11.5px;line-height:14px;color:#6d6d6d;letter-spacing:0.150px;">File folder</span>
<svg style="left:464px;top:355px;" width="13" height="16" viewBox="0 0 13 16"><g opacity="1"><path d="M.2 0 H10.4 V2.6 H12.9 V16 H.2Z" fill="#fcd76b"/><path d="M10.4 2.6 H12.9 V16 H10.4Z" fill="#f3c654"/><path d="M.2 14.6 H12.9 V16 H.2Z" fill="#f6cd5e"/><path d="M1.6 1.4 V13.6" stroke="#fde59a" stroke-width="1"/></g></svg>
<span class="t" style="left:482.50px;top:357.00px;font-size:11.5px;line-height:14px;color:#0c0c0c;letter-spacing:0.141px;">Windows</span>
<span class="t" style="left:722.50px;top:357.00px;font-size:11.5px;line-height:14px;color:#6d6d6d;letter-spacing:-0.053px;">2/6/2024 2:44 PM</span>
<span class="t" style="left:842.00px;top:357.00px;font-size:11.5px;line-height:14px;color:#6d6d6d;letter-spacing:0.150px;">File folder</span>
<span class="t" style="left:298.50px;top:588.00px;font-size:11.5px;line-height:14px;color:#333;letter-spacing:-0.013px;">7 items</span>
<span class="t" style="left:358.00px;top:588.00px;font-size:11.5px;line-height:14px;color:#333;letter-spacing:-0.026px;">1 item selected</span>
<div style="left:1020px;top:583px;width:22px;height:23px;background:#cce8ff;border:1px solid #4d9de0;box-sizing:border-box;"></div>
<svg style="left:1024px;top:588px;" width="15" height="14" viewBox="0 0 15 14"><g fill="#fff" stroke="#6a6a6a" stroke-width=".8"><rect x=".5" y=".5" width="3" height="3"/><rect x=".5" y="5" width="3" height="3"/><rect x=".5" y="9.5" width="3" height="3"/></g><path d="M5.6 2H9M10.6 2H14M5.6 6.5H9M10.6 6.5H14M5.6 11H9M10.6 11H14" stroke="#555" stroke-width="1.1"/></svg>
<svg style="left:1046px;top:588px;" width="15" height="11" viewBox="0 0 15 11"><rect x=".5" y=".5" width="13.6" height="10" fill="#fff" stroke="#8a8f94"/><rect x="2" y="2" width="10.6" height="7" fill="#8fb4e8"/><path d="M2 6 C5 4 8 5 12.6 7.4 V9 H2Z" fill="#35525c"/></svg>
<svg style="left:1036px;top:606px;" width="200" height="66" viewBox="0 0 200 66"><g opacity=".4"><g fill="#fff" stroke="#fff" stroke-width="1.1" font-family="Liberation Sans, sans-serif" font-size="50"><text x="3.5" y="52.5" textLength="64.5" lengthAdjust="spacingAndGlyphs">ANY</text><text x="138.5" y="52.5" textLength="57" lengthAdjust="spacingAndGlyphs">RUN</text></g><g fill="none" stroke="#fff" stroke-width="4" stroke-linejoin="round" stroke-linecap="round"><path d="M86 6.5 L127 33 L88 59.5 M86 6.5 V21"/><path d="M79 12.5 C76.5 12.5 75.5 13.5 75.5 16 V51 C75.5 54.5 77.5 55.5 80 54 L112 33.5"/><path d="M89 23 L104.5 33.2 L89 43.5 Z"/></g></g></svg>
<span class="t" style="left:1221.50px;top:630.00px;font-size:11.5px;line-height:14px;color:#fff;letter-spacing:-0.008px;">Test Mode</span>
<span class="t" style="left:1190.50px;top:647.00px;font-size:11.5px;line-height:14px;color:#fff;letter-spacing:0.020px;">Windows 10 Pro</span>
<span class="t" style="left:1090.00px;top:664.00px;font-size:11.5px;line-height:14px;color:#fff;letter-spacing:-0.188px;">Build 19041.vb_release.191206-1406</span>
<div style="left:0px;top:680px;width:1280px;height:40px;background:linear-gradient(90deg,#0a1c2a 0px,#091a28 600px,#07122a 1000px,#060e26 1280px);"></div>
<svg style="left:16px;top:692px;" width="17" height="17" viewBox="0 0 17 17"><path d="M0 2.4 L7 1.4 V7.8 H0Z M8 1.2 L16.4 0 V7.8 H8Z M0 8.8 H7 V15.2 L0 14.2Z M8 8.8 H16.4 V16.6 L8 15.4Z" fill="#fff"/></svg>
<div style="left:48px;top:680px;width:288px;height:40px;background:#f2f2f2;border-top:1px solid #d6d6d6;border-bottom:1px solid #d6d6d6;box-sizing:border-box;"></div>
<svg style="left:59px;top:692px;" width="19" height="17" viewBox="0 0 19 17"><circle cx="11.6" cy="6.4" r="5.4" fill="none" stroke="#1f1f1f" stroke-width="1.3"/><path d="M7.6 10.2 L1 16.2" stroke="#1f1f1f" stroke-width="1.4"/></svg>
<span class="t" style="left:88.00px;top:692.00px;font-size:15px;line-height:18px;color:#2b2b2b;letter-spacing:-0.282px;">Type here to search</span>
<svg style="left:351px;top:691px;" width="18" height="17" viewBox="0 0 18 17"><g fill="none" stroke="#fff" stroke-width="1.3"><rect x="2.6" y="4" width="9.4" height="9"/><path d="M1 1.6 H13.4 M1 15.6 H13.4"/></g><rect x="14.2" y="4" width="2.8" height="2.8" fill="#fff"/><rect x="15.2" y="1" width="1" height="15.2" fill="#fff"/></svg>
<svg style="left:399px;top:687.5px;" width="25" height="25" viewBox="0 0 25 25"><defs><linearGradient id="te1" x1="0" y1="0" x2="1" y2="0"><stop offset="0" stop-color="#2fb4ec"/><stop offset=".55" stop-color="#3fcfc0"/><stop offset="1" stop-color="#7fdd54"/></linearGradient><linearGradient id="te3" x1="0" y1="0" x2="1" y2="1"><stop offset="0" stop-color="#1d7fd0"/><stop offset="1" stop-color="#164a9a"/></linearGradient></defs><g transform="scale(.51)"><circle cx="24.5" cy="24.5" r="23.5" fill="#2a8fdc"/><path d="M1.5 22 C3 9 13 1 25 1 C38 1 48 10 48 22 C48 31 41 35 35 35 C30 35 27 33 28.5 30 C30 27 30.5 25 29 22 C27 18 22 16.5 18 18 C9 21 6 30 9 38 C3 34 .5 28 1.5 22Z" fill="url(#te1)"/><path d="M9 38 C5 28 10 19 19 17.6 C13 22 13.5 31 19 37 C25 43 36 44 44 36 C40 44 32 48 24.5 48 C18 48 12 44 9 38Z" fill="url(#te3)"/><path d="M19 17.6 C23 16 28 18 29.4 22.4 C30.4 25.4 29.4 27.6 28.4 30 C27 33.4 31 35.4 36 34.8 C31 38 22 36 19.4 30 C17.6 25.6 17.8 20.6 19 17.6Z" fill="#0b1b28"/></g></svg>
<div style="left:436px;top:680px;width:48px;height:40px;background:#37474f;"></div>
<div style="left:436px;top:718px;width:48px;height:2px;background:#76b9ed;"></div>
<svg style="left:448.5px;top:689.5px;" width="23" height="20" viewBox="0 0 23 20"><path d="M0 1.5 H7.5 L9.5 3.8 H22.5 V19.5 H0Z" fill="#e8b23a"/><path d="M0 6 H22.5 V19.5 H0Z" fill="#fbd560"/><path d="M5 19.5 V12 H17.5 V19.5 H14 V15.5 H8.5 V19.5Z" fill="#3b86d8"/></svg>
<svg style="left:497px;top:687.5px;" width="24" height="25" viewBox="0 0 24 25"><g transform="scale(.51)"><path d="M29 1 C33 5 36 9 37 13 C40 11 41 9 41 7 C46 13 47.5 21 46 29 C44 40 35 48 24 48 C11 48 1 38 1 26 C1 20 3 14 7 10 C7 12 7.6 13.6 9 15 C10 12 12 9.6 14 8.6 C14 11 15 13 17 14 C20 9 24 4 29 1Z" fill="url(#ff)"/><circle cx="23.5" cy="25.5" r="9.5" fill="url(#fp)"/><path d="M12 20 C15 16 21 15 26 17 C22 17 19 19 18.6 22 C21 21 24 22 25 24 C21 24 18 27 19 31 C14 29 11 25 12 20Z" fill="#ff9a2e"/></g></svg>
<svg style="left:1073px;top:695.5px;" width="13" height="8" viewBox="0 0 13 8"><path d="M1 7 L6.5 1.5 L12 7" fill="none" stroke="#fff" stroke-width="1.3"/></svg>
<svg style="left:1096.5px;top:691px;" width="14" height="18" viewBox="0 0 14 18"><g fill="none" stroke="#fff" stroke-width="1.2"><rect x="1.2" y="5" width="8" height="8" rx="1.8"/><path d="M9.4 8 L12.8 6.2 V11.8 L9.4 10"/><path d="M1.8 2.8 C3.6 .8 8 .8 9.8 2.8 M1.8 15.2 C3.6 17.2 8 17.2 9.8 15.2"/></g></svg>
<svg style="left:1119px;top:693px;" width="17" height="15" viewBox="0 0 17 15"><g fill="none" stroke="#fff" stroke-width="1.2"><rect x="4.2" y="1.6" width="11.6" height="8"/><path d="M10 9.6 V13 M6 13.4 H14"/><rect x=".6" y=".6" width="4.4" height="4.4" fill="#0b1b28"/><path d="M2.8 5 V10.4 H4.2"/></g></svg>
<svg style="left:1142px;top:692px;" width="18" height="16" viewBox="0 0 18 16"><g fill="none" stroke="#fff" stroke-width="1.2" stroke-linejoin="round"><path d="M1 5.6 H4 L8 2 V14 L4 10.4 H1Z"/><path d="M10.4 5.6 C11.6 7 11.6 9 10.4 10.4 M12.6 3.8 C14.8 6.2 14.8 9.8 12.6 12.2 M14.8 2 C18 5.6 18 10.4 14.8 14"/></g></svg>
<span class="t" style="left:1174.00px;top:684.00px;font-size:11.5px;line-height:14px;color:#fff;letter-spacing:-0.138px;">3:08 PM</span>
<span class="t" style="left:1167.00px;top:702.00px;font-size:11.5px;line-height:14px;color:#fff;letter-spacing:-0.062px;">12/10/2024</span>
<svg style="left:1238.5px;top:692.5px;" width="17" height="16" viewBox="0 0 17 16"><path d="M.7 .7 H16 V11.4 H10 V15 L6.4 11.4 H.7Z" fill="none" stroke="#fff" stroke-width="1.2" stroke-linejoin="miter"/></svg>
<div style="left:1275px;top:680px;width:1px;height:40px;background:#8a8f98;"></div>
</div></body></html>
